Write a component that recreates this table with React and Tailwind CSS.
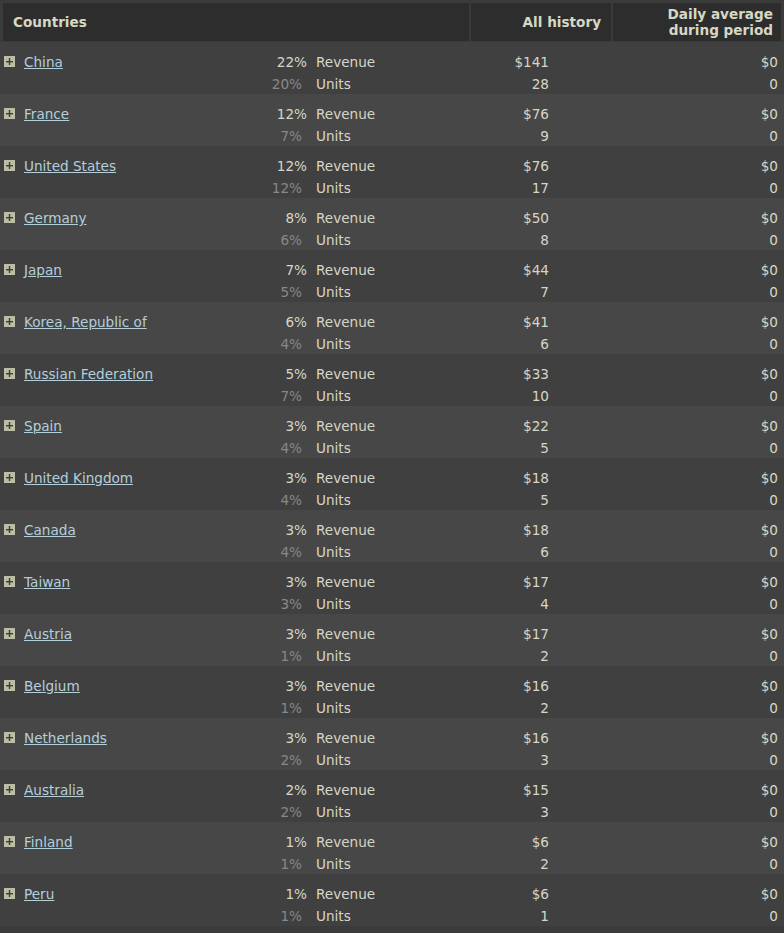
import React from 'react';

const rows = [
  { name: 'China', rp: '22%', up: '20%', rev: '$141', units: '28' },
  { name: 'France', rp: '12%', up: '7%', rev: '$76', units: '9' },
  { name: 'United States', rp: '12%', up: '12%', rev: '$76', units: '17' },
  { name: 'Germany', rp: '8%', up: '6%', rev: '$50', units: '8' },
  { name: 'Japan', rp: '7%', up: '5%', rev: '$44', units: '7' },
  { name: 'Korea, Republic of', rp: '6%', up: '4%', rev: '$41', units: '6' },
  { name: 'Russian Federation', rp: '5%', up: '7%', rev: '$33', units: '10' },
  { name: 'Spain', rp: '3%', up: '4%', rev: '$22', units: '5' },
  { name: 'United Kingdom', rp: '3%', up: '4%', rev: '$18', units: '5' },
  { name: 'Canada', rp: '3%', up: '4%', rev: '$18', units: '6' },
  { name: 'Taiwan', rp: '3%', up: '3%', rev: '$17', units: '4' },
  { name: 'Austria', rp: '3%', up: '1%', rev: '$17', units: '2' },
  { name: 'Belgium', rp: '3%', up: '1%', rev: '$16', units: '2' },
  { name: 'Netherlands', rp: '3%', up: '2%', rev: '$16', units: '3' },
  { name: 'Australia', rp: '2%', up: '2%', rev: '$15', units: '3' },
  { name: 'Finland', rp: '1%', up: '1%', rev: '$6', units: '2' },
  { name: 'Peru', rp: '1%', up: '1%', rev: '$6', units: '1' },
];

const PlusBox = () => (
  <svg width="11" height="11" viewBox="0 0 11 11" className="block">
    <rect x="0" y="0" width="11" height="11" fill="#bdbda6" />
    <rect x="2" y="5" width="7" height="1.4" fill="#3c3c3c" />
    <rect x="4.8" y="2" width="1.4" height="7" fill="#3c3c3c" />
  </svg>
);

const App = () => {
  return (
    <div
      className="min-h-screen bg-[#3b3b3b] pt-[3px] text-[13.6px] text-[#d6d6c6]"
      style={{ fontFamily: '"DejaVu Sans", Verdana, sans-serif' }}
    >
      {/* header */}
      <div className="flex gap-[2px] px-[3px] font-bold text-[#d6d8c4]">
        <div className="w-[466px] h-[38px] bg-[#2d2d2d] flex items-center pl-[10px]">Countries</div>
        <div className="w-[140px] h-[38px] bg-[#2d2d2d] flex items-center justify-end pr-[10px]">All history</div>
        <div className="flex-1 h-[38px] bg-[#2d2d2d] flex items-center justify-end pr-[8px] text-right leading-[16px]">
          Daily average<br />during period
        </div>
      </div>

      {/* rows */}
      <div className="mt-[1px]">
        {rows.map((r, i) => (
          <div
            key={r.name}
            className={`flex h-[52px] pt-[9px] leading-[22px] ${i % 2 === 0 ? 'bg-[#404040]' : 'bg-[#474747]'}`}
          >
            <div className="w-[24px] pl-[4px] pt-[5px]">
              <PlusBox />
            </div>
            <div className="w-[223px]">
              <a href="#" className="underline text-[#b3cfdc]">{r.name}</a>
            </div>
            <div className="w-[60px] text-right">
              <div>{r.rp}</div>
              <div className="pr-[5px] text-[#888888]">{r.up}</div>
            </div>
            <div className="w-[162px] pl-[9px]">
              <div>Revenue</div>
              <div>Units</div>
            </div>
            <div className="w-[80px] text-right">
              <div>{r.rev}</div>
              <div>{r.units}</div>
            </div>
            <div className="flex-1 text-right pr-[6px]">
              <div>$0</div>
              <div>0</div>
            </div>
          </div>
        ))}
      </div>
    </div>
  );
};

export default App;
